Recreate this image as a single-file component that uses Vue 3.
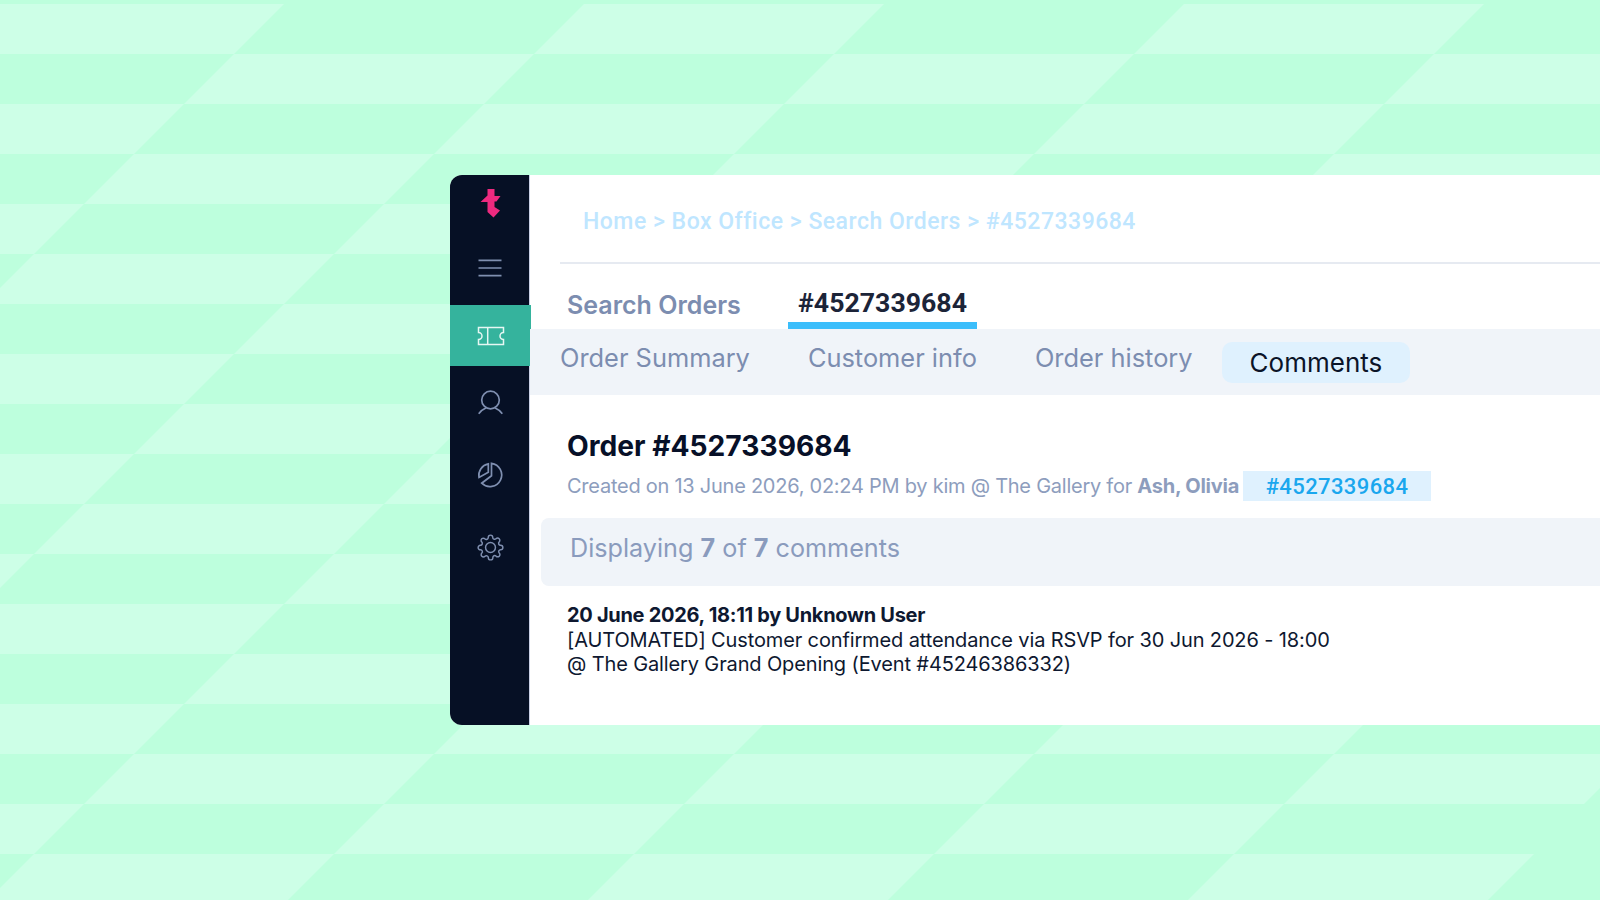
<template>
  <div class="page">
    <svg class="backdrop" width="1600" height="900" viewBox="0 0 1600 900" aria-hidden="true">
      <polygon v-for="(points, i) in lightTiles" :key="i" :points="points" fill="#cdffe7" />
    </svg>

    <div class="card">
      <aside class="sidebar">
        <div class="logo">
          <svg width="24" height="30" viewBox="0 0 24 30">
            <path d="M8.5 1H15.5V8H21.5L17.5 13.5H15.5V19L21 22.5L14.5 29.5L8.5 24V14H1.5L8.5 7.5Z" fill="#ed2a7f" />
          </svg>
        </div>
        <div class="nav-item menu">
          <svg class="icon" width="32" height="32" viewBox="0 0 32 32">
            <path d="M4.5 8.3H27.5M4.5 16H27.5M4.5 23.7H27.5" />
          </svg>
        </div>
        <div class="nav-item active">
          <svg class="icon" width="32" height="32" viewBox="0 0 32 32">
            <path d="M3.5 7.5H28.5V12.5a3.5 3.5 0 0 0 0 7V24.5H3.5V19.5a3.5 3.5 0 0 0 0-7Z" />
            <path d="M12.7 7.5V24.5" />
          </svg>
        </div>
        <div class="nav-item">
          <svg class="icon" width="32" height="32" viewBox="0 0 32 32">
            <circle cx="16.5" cy="14" r="8.8" />
            <path d="M4.7 27.7C7 24.6 9.6 23 12.2 21.8M28.3 27.7C26 24.6 23.4 23 20.8 21.8" />
          </svg>
        </div>
        <div class="nav-item">
          <svg class="icon" width="32" height="32" viewBox="0 0 32 32">
            <path d="M17.5 5.3A11.7 11.7 0 1 1 7.7 25.2L17.5 17.8Z" />
            <path d="M14.3 5.9A11.7 11.7 0 0 0 5 19.4L14.3 14.3Z" />
          </svg>
        </div>
        <div class="nav-item settings">
          <svg class="icon gear" width="27" height="27" viewBox="0 0 24 24">
            <circle cx="12" cy="12" r="4.4" />
            <path d="M19.4 15a1.65 1.65 0 0 0 .33 1.82l.06.06a2 2 0 0 1 0 2.83 2 2 0 0 1-2.83 0l-.06-.06a1.65 1.65 0 0 0-1.82-.33 1.65 1.65 0 0 0-1 1.51V21a2 2 0 0 1-2 2 2 2 0 0 1-2-2v-.09A1.65 1.65 0 0 0 9 19.4a1.65 1.65 0 0 0-1.82.33l-.06.06a2 2 0 0 1-2.83 0 2 2 0 0 1 0-2.83l.06-.06a1.65 1.65 0 0 0 .33-1.82 1.65 1.65 0 0 0-1.51-1H3a2 2 0 0 1-2-2 2 2 0 0 1 2-2h.09A1.65 1.65 0 0 0 4.6 9a1.65 1.65 0 0 0-.33-1.82l-.06-.06a2 2 0 0 1 0-2.83 2 2 0 0 1 2.83 0l.06.06a1.65 1.65 0 0 0 1.82.33H9a1.65 1.65 0 0 0 1-1.51V3a2 2 0 0 1 2-2 2 2 0 0 1 2 2v.09a1.65 1.65 0 0 0 1 1.51 1.65 1.65 0 0 0 1.82-.33l.06-.06a2 2 0 0 1 2.83 0 2 2 0 0 1 0 2.83l-.06.06a1.65 1.65 0 0 0-.33 1.82V9a1.65 1.65 0 0 0 1.51 1H21a2 2 0 0 1 2 2 2 2 0 0 1-2 2h-.09a1.65 1.65 0 0 0-1.51 1z" />
          </svg>
        </div>
      </aside>

      <main class="content">
        <div class="crumbs">
          <span>Home &gt; Box Office &gt; Search Orders &gt; #4527339684</span>
        </div>

        <div class="page-tabs">
          <span class="page-tab">Search Orders</span>
          <span class="page-tab current">#4527339684</span>
        </div>

        <nav class="sub-tabs">
          <span v-for="tab in tabs" :key="tab" class="sub-tab" :class="{ selected: tab === 'Comments' }">{{ tab }}</span>
        </nav>

        <section class="order">
          <h1>Order #4527339684</h1>
          <div class="meta">
            <span>Created on 13 June 2026, 02:24 PM by kim @ The Gallery for <b>Ash, Olivia</b></span>
            <span class="badge">#4527339684</span>
          </div>
        </section>

        <div class="count">Displaying <b>7</b> of <b>7</b> comments</div>

        <div class="comment">
          <strong>20 June 2026, 18:11 by Unknown User</strong><br />
          [AUTOMATED] Customer confirmed attendance via RSVP for 30 Jun 2026 - 18:00<br />
          @ The Gallery Grand Opening (Event #45246386332)
        </div>
      </main>
    </div>
  </div>
</template>

<script setup>
import { computed } from 'vue'

const tabs = ['Order Summary', 'Customer info', 'Order history', 'Comments']

// stripes crossed with diagonal bands, a tile is light when both indexes add up even
const lightTiles = computed(() => {
  const out = []
  for (let row = 0; row < 18; row++) {
    const top = 4 + row * 50
    for (let band = 0; band < 8; band++) {
      if ((row + band) % 2) continue
      const left = 288 + 300 * (band - 1) - top
      const right = left + 300
      out.push(`${left},${top} ${right},${top} ${right - 50},${top + 50} ${left - 50},${top + 50}`)
    }
  }
  return out
})
</script>

<style scoped>
.page {
  position: relative;
  width: 1600px;
  height: 900px;
  overflow: hidden;
  background: #bdffdd;
  padding: 175px 0 0 450px;
  box-sizing: border-box;
  font-family: Inter, "Noto Sans", sans-serif;
}

.backdrop {
  position: absolute;
  top: 0;
  left: 0;
}

.card {
  position: relative;
  display: flex;
  width: 1150px;
  height: 550px;
  background: #fff;
  border-radius: 12px 0 0 12px;
}

.sidebar {
  width: 79px;
  flex-shrink: 0;
  background: #061025;
  border-right: 1px solid #c9d0e6;
  border-radius: 12px 0 0 12px;
}

.logo {
  height: 56px;
  padding-left: 2px;
  display: flex;
  align-items: center;
  justify-content: center;
}

.nav-item {
  height: 72px;
  padding-left: 1px;
  display: flex;
  align-items: center;
  justify-content: center;
}

.menu {
  height: 74px;
}

.active {
  height: 61px;
  width: 81px;
  padding-left: 0;
  background: #35b39d;
}

.settings {
  padding: 3px 0 0 2px;
  height: 69px;
}

.icon {
  fill: none;
  stroke: #7f8fb0;
  stroke-width: 1.7;
}

.active .icon {
  stroke: #e6f7f3;
  stroke-width: 1.5;
}

.gear {
  stroke-width: 1.3;
}

.content {
  flex: 1;
  min-width: 0;
}

.crumbs {
  height: 81px;
  margin-left: 30px;
  padding: 6px 0 0 23px;
  border-bottom: 2px solid #e6eaf1;
  display: flex;
  align-items: center;
  font-family: Roboto, sans-serif;
  font-size: 23px;
  font-weight: 500;
  letter-spacing: 0.5px;
  color: #bfe6ff;
}

.page-tabs {
  height: 65px;
  display: flex;
  align-items: flex-end;
  padding-left: 37px;
}

.page-tab {
  font-size: 25px;
  font-weight: 600;
  color: #7c8db0;
  padding-bottom: 9px;
  width: 221px;
}

.current {
  width: 189px;
  box-sizing: border-box;
  text-align: center;
  font-family: Roboto, sans-serif;
  font-weight: 700;
  font-size: 26.7px;
  color: #1c2438;
  border-bottom: 7px solid #3bbefb;
  padding-bottom: 3px;
}

.sub-tabs {
  height: 66px;
  background: #f0f4f9;
  display: flex;
  align-items: center;
  padding-left: 1px;
}

.sub-tab {
  padding: 0 29px 9px;
  font-size: 25.4px;
  color: #7c8db0;
}

.selected {
  padding: 0 28px;
  height: 41px;
  line-height: 41px;
  font-size: 26px;
  background: #dff1fe;
  border-radius: 10px;
  color: #0b1428;
}

.order {
  padding: 33px 0 0 37px;
  height: 123px;
  box-sizing: border-box;
}

h1 {
  margin: 0;
  font-size: 28.2px;
  line-height: 36px;
  font-weight: 700;
  color: #071028;
}

.meta {
  display: flex;
  align-items: center;
  gap: 4px;
  margin-top: 6px;
  font-size: 20px;
  letter-spacing: -0.25px;
  color: #8d9dbd;
}

.badge {
  width: 188px;
  height: 30px;
  margin-top: 1px;
  line-height: 31px;
  text-align: center;
  background: #dff1fe;
  color: #1aa7ee;
  font-family: Roboto, sans-serif;
  font-weight: 500;
  font-size: 22px;
  letter-spacing: 0.4px;
}

.count {
  margin-left: 11px;
  height: 68px;
  line-height: 60px;
  padding-left: 29px;
  background: #f0f4f9;
  border-radius: 8px 0 0 8px;
  font-size: 25.2px;
  color: #8a9bbd;
}

.comment {
  padding: 17px 0 0 37px;
  font-size: 20px;
  letter-spacing: -0.13px;
  line-height: 24.5px;
  color: #0e1830;
}

.comment strong {
  letter-spacing: -0.3px;
}
</style>
